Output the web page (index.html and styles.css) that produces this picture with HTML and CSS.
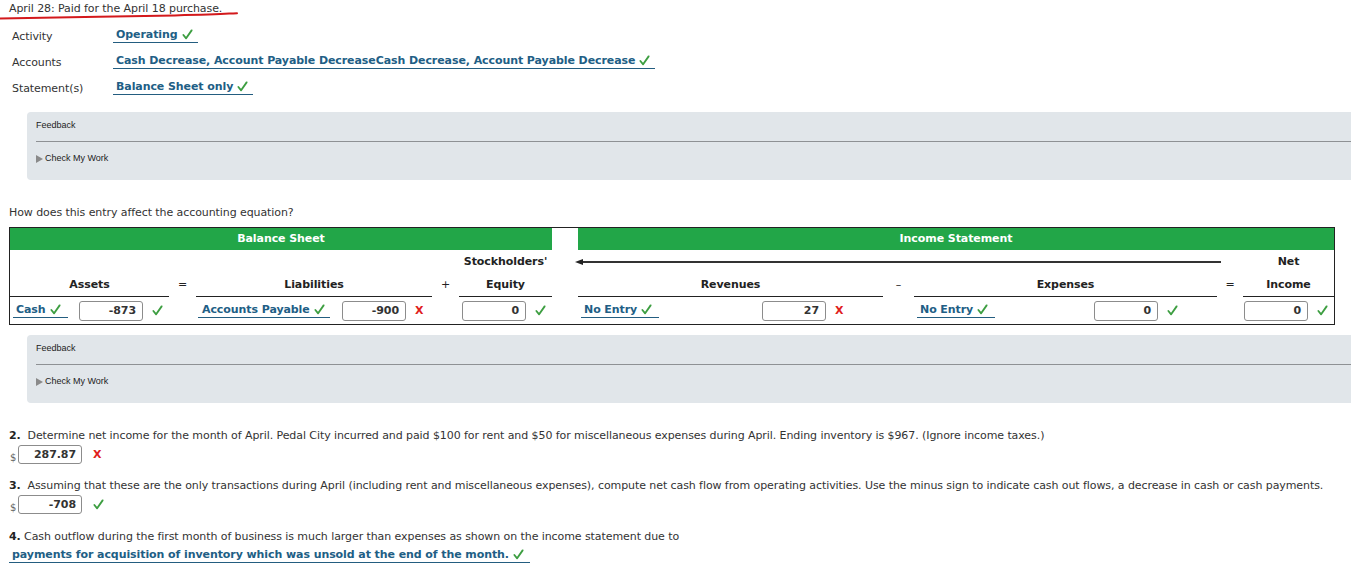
FILE: index.html
```html
<!DOCTYPE html>
<html lang="en">
<head>
<meta charset="utf-8">
<title>April 28</title>
<link rel="stylesheet" href="styles.css">
</head>
<body>
<div class="page">
  <div class="title">April 28: Paid for the April 18 purchase.
    <svg class="scribble" viewBox="0 0 250 22" width="250" height="22" aria-hidden="true"><path d="M0 18.5 C 50 17.6, 120 16.6, 175 15.4 S 225 13.6, 237 13.2" fill="none" stroke="#d3191c" stroke-width="2" stroke-linecap="round"/></svg>
  </div>

  <div class="props">
    <div class="prop"><span class="plabel">Activity</span><span class="ans">Operating <svg class="ck" viewBox="0 0 12 12"><path d="M1.5 6.5 L4.5 10.2 L10.5 1.5"/></svg></span></div>
    <div class="prop"><span class="plabel">Accounts</span><span class="ans">Cash Decrease, Account Payable DecreaseCash Decrease, Account Payable Decrease <svg class="ck" viewBox="0 0 12 12"><path d="M1.5 6.5 L4.5 10.2 L10.5 1.5"/></svg></span></div>
    <div class="prop"><span class="plabel">Statement(s)</span><span class="ans">Balance Sheet only <svg class="ck" viewBox="0 0 12 12"><path d="M1.5 6.5 L4.5 10.2 L10.5 1.5"/></svg></span></div>
  </div>

  <div class="feedback">
    <div class="fb-head">Feedback</div>
    <div class="fb-body"><span class="tri"></span>Check My Work</div>
  </div>

  <p class="q">How does this entry affect the accounting equation?</p>

  <div class="eq">
    <div class="gh bs">Balance Sheet</div>
    <div class="gh is">Income Statement</div>

    <div class="stock">Stockholders'</div>
    <div class="arrow"><span class="arrow-line"></span></div>
    <div class="net">Net</div>

    <div class="h c1">Assets</div>
    <div class="op c2">=</div>
    <div class="h c3">Liabilities</div>
    <div class="op c4">+</div>
    <div class="h c5">Equity</div>
    <div class="h c7">Revenues</div>
    <div class="op c8">&ndash;</div>
    <div class="h c9">Expenses</div>
    <div class="op c10">=</div>
    <div class="h c11">Income</div>

    <div class="cell c1 r4">
      <span class="lnk">Cash <svg class="ck" viewBox="0 0 12 12"><path d="M1.5 6.5 L4.5 10.2 L10.5 1.5"/></svg></span>
      <span class="box">-873</span><span class="mk"><svg class="ck" viewBox="0 0 12 12"><path d="M1.5 6.5 L4.5 10.2 L10.5 1.5"/></svg></span>
    </div>
    <div class="cell c3 r4">
      <span class="lnk">Accounts Payable <svg class="ck" viewBox="0 0 12 12"><path d="M1.5 6.5 L4.5 10.2 L10.5 1.5"/></svg></span>
      <span class="box">-900</span><span class="mk"><span class="x">X</span></span>
    </div>
    <div class="cell c5 r4">
      <span class="box">0</span><span class="mk"><svg class="ck" viewBox="0 0 12 12"><path d="M1.5 6.5 L4.5 10.2 L10.5 1.5"/></svg></span>
    </div>
    <div class="cell c7 r4 wide">
      <span class="lnk">No Entry <svg class="ck" viewBox="0 0 12 12"><path d="M1.5 6.5 L4.5 10.2 L10.5 1.5"/></svg></span>
      <span class="box">27</span><span class="mk"><span class="x">X</span></span>
    </div>
    <div class="cell c9 r4 wide2">
      <span class="lnk">No Entry <svg class="ck" viewBox="0 0 12 12"><path d="M1.5 6.5 L4.5 10.2 L10.5 1.5"/></svg></span>
      <span class="box">0</span><span class="mk"><svg class="ck" viewBox="0 0 12 12"><path d="M1.5 6.5 L4.5 10.2 L10.5 1.5"/></svg></span>
    </div>
    <div class="cell c11 r4">
      <span class="box">0</span><span class="mk"><svg class="ck" viewBox="0 0 12 12"><path d="M1.5 6.5 L4.5 10.2 L10.5 1.5"/></svg></span>
    </div>
  </div>

  <div class="feedback fb2">
    <div class="fb-head">Feedback</div>
    <div class="fb-body"><span class="tri"></span>Check My Work</div>
  </div>

  <p class="qq q2"><b>2.</b>&nbsp; Determine net income for the month of April. Pedal City incurred and paid $100 for rent and $50 for miscellaneous expenses during April. Ending inventory is $967. (Ignore income taxes.)</p>
  <div class="answer"><span class="dollar">$</span><span class="qbox">287.87</span><span class="qmk"><span class="x">X</span></span></div>

  <p class="qq q3"><b>3.</b>&nbsp; Assuming that these are the only transactions during April (including rent and miscellaneous expenses), compute net cash flow from operating activities. Use the minus sign to indicate cash out flows, a decrease in cash or cash payments.</p>
  <div class="answer"><span class="dollar">$</span><span class="qbox">-708</span><span class="qmk"><svg class="ck" viewBox="0 0 12 12"><path d="M1.5 6.5 L4.5 10.2 L10.5 1.5"/></svg></span></div>

  <p class="qq q4"><b>4.</b> Cash outflow during the first month of business is much larger than expenses as shown on the income statement due to</p>
  <div class="final"><span class="ans">payments for acquisition of inventory which was unsold at the end of the month. <svg class="ck" viewBox="0 0 12 12"><path d="M1.5 6.5 L4.5 10.2 L10.5 1.5"/></svg></span></div>
</div>
</body>
</html>
```

FILE: styles.css
```css
* { box-sizing: border-box; }

html, body {
  margin: 0;
  overflow: hidden;
  background: #fff;
}

body {
  font-family: "DejaVu Sans", Verdana, sans-serif;
  font-size: 11px;
  letter-spacing: -0.08px;
  color: #333;
}

.page {
  width: 1351px;
  padding-left: 9px;
}

.title {
  position: relative;
  height: 22px;
  padding-top: 2px;
  line-height: 13px;
  color: #333;
}

.scribble {
  position: absolute;
  left: -9px;
  top: 0;
}

.ck {
  width: 11px;
  height: 11px;
  flex: none;
}

.ck path {
  fill: none;
  stroke: #3d9e41;
  stroke-width: 2;
  stroke-linecap: round;
  stroke-linejoin: round;
}

.x {
  color: #e0201c;
  font-weight: bold;
  font-size: 11px;
  line-height: 13px;
}

/* properties */
.prop {
  display: flex;
  align-items: center;
  height: 26px;
}

.plabel {
  width: 104px;
  padding-left: 3px;
  padding-top: 3px;
}

.ans {
  display: inline-flex;
  align-items: center;
  gap: 4px;
  font-weight: bold;
  color: #215e85;
  border-bottom: 1px solid #235d80;
  padding: 0 5px 1px 3px;
  line-height: 13px;
}

/* feedback */
.feedback {
  margin: 12px -20px 0 18px;
  height: 68px;
  background: #e1e6ea;
  border-radius: 4px;
  font-family: "Liberation Sans", Arial, sans-serif;
  font-size: 9px;
  letter-spacing: 0;
  color: #222;
}

.fb2 { margin-top: 10px; }

.fb-head {
  height: 29px;
  padding: 8px 0 0 9px;
  line-height: 11px;
}

.fb-body {
  margin-left: 9px;
  border-top: 1px solid #8e9194;
  padding-top: 11px;
  line-height: 11px;
  display: flex;
  align-items: center;
}

.tri {
  width: 0;
  height: 0;
  border-left: 7px solid #8a8a8a;
  border-top: 4px solid transparent;
  border-bottom: 4px solid transparent;
  margin-right: 2px;
}

.q {
  margin: 26px 0 0;
  line-height: 13px;
}

/* equation table */
.eq {
  margin-top: 8px;
  width: 1326px;
  border: 1px solid #222;
  display: grid;
  grid-template-columns: 159px 27px 236px 27px 93px 26px 305px 31px 303px 26px 91px;
  grid-template-rows: 22px 24px 23px 27px;
}

.gh {
  grid-row: 1;
  background: #22a648;
  color: #fff;
  font-weight: bold;
  text-align: center;
  line-height: 22px;
}

.bs { grid-column: 1 / 6; }
.is { grid-column: 7 / 12; }

.stock, .net {
  grid-row: 2;
  font-weight: bold;
  text-align: center;
  line-height: 24px;
  color: #222;
}

.stock { grid-column: 5; }
.net { grid-column: 11; }

.arrow {
  grid-row: 2;
  grid-column: 6 / 11;
  margin: 0 22px 0 23px;
  display: flex;
  align-items: center;
}

.arrow::before {
  content: "";
  width: 0;
  height: 0;
  border-right: 8px solid #222;
  border-top: 3.5px solid transparent;
  border-bottom: 3.5px solid transparent;
}

.arrow-line {
  flex: 1;
  height: 2px;
  background: #333;
}

.h, .op {
  grid-row: 3;
  text-align: center;
  line-height: 22px;
  color: #222;
}

.h {
  font-weight: bold;
  border-bottom: 1px solid #222;
}

.c1 { grid-column: 1; }
.c2 { grid-column: 2; }
.c3 { grid-column: 3; }
.c4 { grid-column: 4; }
.c5 { grid-column: 5; }
.c7 { grid-column: 7; }
.c8 { grid-column: 8; }
.c9 { grid-column: 9; }
.c10 { grid-column: 10; }
.c11 { grid-column: 11; }

.r4 {
  grid-row: 4;
  display: flex;
  align-items: center;
  justify-content: flex-end;
}

.wide { padding-right: 31px; }
.wide2 { padding-right: 33px; }

.lnk {
  display: inline-flex;
  align-items: center;
  gap: 4px;
  margin-left: 3px;
  margin-right: auto;
  padding: 0 7px 1px 3px;
  font-weight: bold;
  color: #215e85;
  border-bottom: 1px solid #235d80;
  line-height: 13px;
}

.c3 .lnk { margin-left: 2px; padding-left: 4px; padding-right: 5px; }

.box {
  width: 64px;
  height: 20px;
  border: 1px solid #8c8c8c;
  border-radius: 3px;
  background: #fff;
  text-align: right;
  padding-right: 6px;
  line-height: 18px;
  font-weight: bold;
  color: #333;
}

.mk {
  width: 26px;
  padding-left: 9px;
  display: flex;
  align-items: center;
}

/* questions */
.qq {
  margin: 26px 0 0;
  line-height: 13px;
  color: #333;
}

.q3 { margin-top: 15px; }
.q4 { margin-top: 16px; }

.qq b { color: #222; }

.answer {
  display: flex;
  align-items: center;
  height: 20px;
  margin-top: 2px;
}

.dollar {
  width: 8px;
  margin-left: 1px;
  align-self: flex-end;
  font-size: 10px;
  line-height: 13px;
  color: #666;
}

.qbox {
  width: 64px;
  height: 19px;
  border: 1px solid #8c8c8c;
  border-radius: 3px;
  text-align: right;
  padding-right: 5px;
  line-height: 17px;
  font-weight: bold;
  color: #333;
}

.qmk {
  padding-left: 11px;
  display: flex;
  align-items: center;
}

.final {
  margin-top: 5px;
}

.final .ans {
  padding-left: 3px;
  padding-right: 6px;
}
```
